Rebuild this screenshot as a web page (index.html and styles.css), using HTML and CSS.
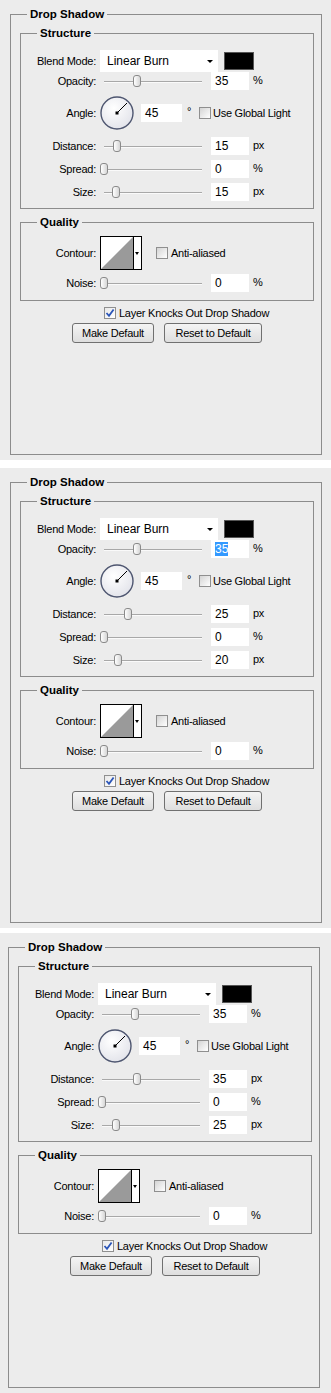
FILE: index.html
```html
<!DOCTYPE html>
<html lang="en">
<head>
  <meta charset="UTF-8">
  <title>Drop Shadow</title>
  <link rel="stylesheet" href="styles.css">
</head>
<body>

<!-- panel 1 -->
<div class="panel">
  <div class="outer">
    <div class="title">Drop Shadow</div>
    <div class="group">
      <div class="title">Structure</div>
      <div class="row row-blend">
        <span class="label">Blend Mode:</span>
        <div class="select">Linear Burn<span class="arrow"></span></div>
        <div class="swatch"></div>
      </div>
      <div class="row row-opacity">
        <span class="label">Opacity:</span>
        <div class="slider"><span class="thumb" style="left: 33px"></span></div>
        <div class="field">35</div>
        <span class="unit">%</span>
      </div>
      <div class="row row-angle">
        <span class="label">Angle:</span>
        <svg class="dial" width="34" height="34" viewBox="0 0 34 34">
          <defs>
            <radialGradient id="dialfill1" cx="40%" cy="35%" r="70%">
              <stop offset="0" stop-color="#ffffff"/>
              <stop offset="1" stop-color="#e2e3ea"/>
            </radialGradient>
          </defs>
          <circle cx="17" cy="17" r="16" fill="url(#dialfill1)" stroke="#4e5670" stroke-width="1.4"/>
          <line x1="17" y1="17" x2="27" y2="7" stroke="#000" stroke-width="1"/>
          <rect x="15.5" y="15.5" width="3" height="3" fill="#000"/>
        </svg>
        <div class="field field-angle">45</div>
        <span class="degree">&deg;</span>
        <span class="check"></span>
        <span class="check-text">Use Global Light</span>
      </div>
      <div class="row row-slider">
        <span class="label">Distance:</span>
        <div class="slider"><span class="thumb" style="left: 13px"></span></div>
        <div class="field">15</div>
        <span class="unit">px</span>
      </div>
      <div class="row row-slider">
        <span class="label">Spread:</span>
        <div class="slider"><span class="thumb" style="left: 0px"></span></div>
        <div class="field">0</div>
        <span class="unit">%</span>
      </div>
      <div class="row row-slider">
        <span class="label">Size:</span>
        <div class="slider"><span class="thumb" style="left: 12px"></span></div>
        <div class="field">15</div>
        <span class="unit">px</span>
      </div>
    </div>

    <div class="group group-quality">
      <div class="title">Quality</div>
      <div class="row row-contour">
        <span class="label">Contour:</span>
        <div class="contour">
          <svg width="34" height="34" viewBox="0 0 34 34">
            <rect x="0.5" y="0.5" width="33" height="33" fill="#fff" stroke="#000"/>
            <polygon points="1,33 33,1 33,33" fill="#9a9a9a"/>
          </svg>
          <span class="contour-arrow"></span>
        </div>
        <span class="check check-aa"></span>
        <span class="check-text">Anti-aliased</span>
      </div>
      <div class="row row-slider">
        <span class="label">Noise:</span>
        <div class="slider"><span class="thumb" style="left: 0px"></span></div>
        <div class="field">0</div>
        <span class="unit">%</span>
      </div>
    </div>

    <div class="knocks">
      <span class="check checked">
        <svg width="10" height="10" viewBox="0 0 10 10"><path d="M1.5 5 L4 7.8 L8.6 1.5" fill="none" stroke="#2b55b8" stroke-width="1.8"/></svg>
      </span>
      <span class="check-text">Layer Knocks Out Drop Shadow</span>
    </div>
    <div class="buttons">
      <button class="btn btn-make">Make Default</button>
      <button class="btn btn-reset">Reset to Default</button>
    </div>
  </div>
</div>

<!-- panel 2 -->
<div class="panel panel-second">
  <div class="outer">
    <div class="title">Drop Shadow</div>
    <div class="group">
      <div class="title">Structure</div>
      <div class="row row-blend">
        <span class="label">Blend Mode:</span>
        <div class="select">Linear Burn<span class="arrow"></span></div>
        <div class="swatch"></div>
      </div>
      <div class="row row-opacity">
        <span class="label">Opacity:</span>
        <div class="slider"><span class="thumb" style="left: 33px"></span></div>
        <div class="field"><span class="selected">35</span></div>
        <span class="unit">%</span>
      </div>
      <div class="row row-angle">
        <span class="label">Angle:</span>
        <svg class="dial" width="34" height="34" viewBox="0 0 34 34">
          <defs>
            <radialGradient id="dialfill2" cx="40%" cy="35%" r="70%">
              <stop offset="0" stop-color="#ffffff"/>
              <stop offset="1" stop-color="#e2e3ea"/>
            </radialGradient>
          </defs>
          <circle cx="17" cy="17" r="16" fill="url(#dialfill2)" stroke="#4e5670" stroke-width="1.4"/>
          <line x1="17" y1="17" x2="27" y2="7" stroke="#000" stroke-width="1"/>
          <rect x="15.5" y="15.5" width="3" height="3" fill="#000"/>
        </svg>
        <div class="field field-angle">45</div>
        <span class="degree">&deg;</span>
        <span class="check"></span>
        <span class="check-text">Use Global Light</span>
      </div>
      <div class="row row-slider">
        <span class="label">Distance:</span>
        <div class="slider"><span class="thumb" style="left: 24px"></span></div>
        <div class="field">25</div>
        <span class="unit">px</span>
      </div>
      <div class="row row-slider">
        <span class="label">Spread:</span>
        <div class="slider"><span class="thumb" style="left: 0px"></span></div>
        <div class="field">0</div>
        <span class="unit">%</span>
      </div>
      <div class="row row-slider">
        <span class="label">Size:</span>
        <div class="slider"><span class="thumb" style="left: 14px"></span></div>
        <div class="field">20</div>
        <span class="unit">px</span>
      </div>
    </div>

    <div class="group group-quality">
      <div class="title">Quality</div>
      <div class="row row-contour">
        <span class="label">Contour:</span>
        <div class="contour">
          <svg width="34" height="34" viewBox="0 0 34 34">
            <rect x="0.5" y="0.5" width="33" height="33" fill="#fff" stroke="#000"/>
            <polygon points="1,33 33,1 33,33" fill="#9a9a9a"/>
          </svg>
          <span class="contour-arrow"></span>
        </div>
        <span class="check check-aa"></span>
        <span class="check-text">Anti-aliased</span>
      </div>
      <div class="row row-slider">
        <span class="label">Noise:</span>
        <div class="slider"><span class="thumb" style="left: 0px"></span></div>
        <div class="field">0</div>
        <span class="unit">%</span>
      </div>
    </div>

    <div class="knocks">
      <span class="check checked">
        <svg width="10" height="10" viewBox="0 0 10 10"><path d="M1.5 5 L4 7.8 L8.6 1.5" fill="none" stroke="#2b55b8" stroke-width="1.8"/></svg>
      </span>
      <span class="check-text">Layer Knocks Out Drop Shadow</span>
    </div>
    <div class="buttons">
      <button class="btn btn-make">Make Default</button>
      <button class="btn btn-reset">Reset to Default</button>
    </div>
  </div>
</div>

<!-- panel 3 -->
<div class="panel panel-third">
  <div class="outer">
    <div class="title">Drop Shadow</div>
    <div class="group">
      <div class="title">Structure</div>
      <div class="row row-blend">
        <span class="label">Blend Mode:</span>
        <div class="select">Linear Burn<span class="arrow"></span></div>
        <div class="swatch"></div>
      </div>
      <div class="row row-opacity">
        <span class="label">Opacity:</span>
        <div class="slider"><span class="thumb" style="left: 33px"></span></div>
        <div class="field">35</div>
        <span class="unit">%</span>
      </div>
      <div class="row row-angle">
        <span class="label">Angle:</span>
        <svg class="dial" width="34" height="34" viewBox="0 0 34 34">
          <defs>
            <radialGradient id="dialfill3" cx="40%" cy="35%" r="70%">
              <stop offset="0" stop-color="#ffffff"/>
              <stop offset="1" stop-color="#e2e3ea"/>
            </radialGradient>
          </defs>
          <circle cx="17" cy="17" r="16" fill="url(#dialfill3)" stroke="#4e5670" stroke-width="1.4"/>
          <line x1="17" y1="17" x2="27" y2="7" stroke="#000" stroke-width="1"/>
          <rect x="15.5" y="15.5" width="3" height="3" fill="#000"/>
        </svg>
        <div class="field field-angle">45</div>
        <span class="degree">&deg;</span>
        <span class="check"></span>
        <span class="check-text">Use Global Light</span>
      </div>
      <div class="row row-slider">
        <span class="label">Distance:</span>
        <div class="slider"><span class="thumb" style="left: 35px"></span></div>
        <div class="field">35</div>
        <span class="unit">px</span>
      </div>
      <div class="row row-slider">
        <span class="label">Spread:</span>
        <div class="slider"><span class="thumb" style="left: 0px"></span></div>
        <div class="field">0</div>
        <span class="unit">%</span>
      </div>
      <div class="row row-slider">
        <span class="label">Size:</span>
        <div class="slider"><span class="thumb" style="left: 14px"></span></div>
        <div class="field">25</div>
        <span class="unit">px</span>
      </div>
    </div>

    <div class="group group-quality">
      <div class="title">Quality</div>
      <div class="row row-contour">
        <span class="label">Contour:</span>
        <div class="contour">
          <svg width="34" height="34" viewBox="0 0 34 34">
            <rect x="0.5" y="0.5" width="33" height="33" fill="#fff" stroke="#000"/>
            <polygon points="1,33 33,1 33,33" fill="#9a9a9a"/>
          </svg>
          <span class="contour-arrow"></span>
        </div>
        <span class="check check-aa"></span>
        <span class="check-text">Anti-aliased</span>
      </div>
      <div class="row row-slider">
        <span class="label">Noise:</span>
        <div class="slider"><span class="thumb" style="left: 0px"></span></div>
        <div class="field">0</div>
        <span class="unit">%</span>
      </div>
    </div>

    <div class="knocks">
      <span class="check checked">
        <svg width="10" height="10" viewBox="0 0 10 10"><path d="M1.5 5 L4 7.8 L8.6 1.5" fill="none" stroke="#2b55b8" stroke-width="1.8"/></svg>
      </span>
      <span class="check-text">Layer Knocks Out Drop Shadow</span>
    </div>
    <div class="buttons">
      <button class="btn btn-make">Make Default</button>
      <button class="btn btn-reset">Reset to Default</button>
    </div>
  </div>
</div>

</body>
</html>
```

FILE: styles.css
```css
body {
  margin: 0;
  background-color: #fff;
  font-family: 'Liberation Sans', Arial, sans-serif;
  font-size: 11px;
  letter-spacing: -0.25px;
  color: #000;
}
.panel {
  height: 460px;
  box-sizing: border-box;
  padding: 14px 9px 0 10px;
  background-color: #ececec;
}
.panel-second {
  margin-top: 8px;
}
.panel-third {
  margin-top: 5px;
  padding-left: 8px;
  padding-right: 11px;
}
.outer {
  height: 441px;
  box-sizing: border-box;
  border: 1px solid #8c8c8c;
}
.title {
  display: table;
  margin: -8px 0 0 16px;
  padding: 0 3px;
  line-height: 15px;
  font-weight: bold;
  font-size: 11.5px;
  letter-spacing: 0;
  background-color: #ececec;
}
.group {
  margin: 11px 7px 0 9px;
  padding-bottom: 6px;
  border: 1px solid #8c8c8c;
}
.group-quality {
  margin-top: 13px;
  padding-bottom: 7px;
}

/* rows */
.row {
  display: flex;
  align-items: center;
}
.label {
  width: 75px;
  margin-right: 4px;
  text-align: right;
}
.row-blend {
  height: 22px;
  margin-top: 9px;
}
.row-opacity {
  height: 18px;
}
.row-angle {
  height: 38px;
  margin-top: 4px;
}
.row-slider {
  height: 20px;
  margin-top: 3px;
}
.row-angle + .row-slider {
  margin-top: 4px;
}
.row-contour {
  height: 34px;
  margin-top: 6px;
}

/* controls */
.select {
  position: relative;
  width: 118px;
  height: 22px;
  box-sizing: border-box;
  padding-left: 7px;
  line-height: 22px;
  font-size: 12px;
  letter-spacing: 0;
  background-color: #fff;
}
.arrow {
  position: absolute;
  right: 5px;
  top: 10px;
  border-left: 3px solid transparent;
  border-right: 3px solid transparent;
  border-top: 3px solid #000;
}
.swatch {
  width: 30px;
  height: 18px;
  margin-left: 6px;
  box-sizing: border-box;
  background-color: #000;
  border: 1px solid #555;
}
.slider {
  position: relative;
  width: 107px;
  height: 20px;
}
.slider::before {
  content: '';
  position: absolute;
  left: 4px;
  right: 5px;
  top: 10px;
  height: 1px;
  background-color: #a8a8a8;
  box-shadow: 0 1px 0 #fafafa;
}
.thumb {
  position: absolute;
  top: 4px;
  width: 8px;
  height: 12px;
  box-sizing: border-box;
  border: 1px solid #8a8a8a;
  border-radius: 3px;
  background: linear-gradient(to right, #ffffff, #d6d6d6);
}
.field {
  width: 38px;
  height: 18px;
  margin-left: 4px;
  box-sizing: border-box;
  padding-left: 4px;
  line-height: 19px;
  font-size: 12px;
  letter-spacing: 0;
  background-color: #fff;
}
.field-angle {
  width: 41px;
  margin-left: 7px;
}
.selected {
  background-color: #3399ff;
  color: #fff;
}
.unit {
  margin-left: 4px;
  margin-top: -3px;
}
.degree {
  width: 12px;
  margin-left: 5px;
  margin-top: -5px;
}
.check {
  display: inline-flex;
  align-items: center;
  justify-content: center;
  width: 12px;
  height: 12px;
  box-sizing: border-box;
  border: 1px solid #8f8f8f;
  background: linear-gradient(135deg, #d4d4d4, #ffffff);
}
.check-text {
  margin-left: 2px;
}
.contour {
  display: flex;
  height: 34px;
}
.contour-arrow {
  position: relative;
  width: 8px;
  box-sizing: border-box;
  border: 1px solid #000;
  border-left: none;
  background-color: #fff;
}
.contour-arrow::after {
  content: '';
  position: absolute;
  left: 1px;
  top: 15px;
  border-left: 2px solid transparent;
  border-right: 2px solid transparent;
  border-top: 3px solid #000;
}
.check-aa {
  margin-left: 14px;
}
.check-aa + .check-text {
  margin-left: 3px;
}
.knocks {
  display: flex;
  align-items: center;
  height: 14px;
  margin-top: 5px;
  padding-left: 93px;
}
.knocks .check-text {
  margin-left: 3px;
}
.checked {
  background: linear-gradient(135deg, #e8e8e8, #ffffff);
}
.buttons {
  display: flex;
  gap: 10px;
  margin-top: 3px;
  padding-left: 61px;
}
.btn {
  height: 20px;
  padding: 0;
  font-family: 'Liberation Sans', Arial, sans-serif;
  font-size: 11px;
  letter-spacing: -0.25px;
  color: #000;
  border: 1px solid #707070;
  border-radius: 3px;
  background: linear-gradient(#f4f4f4, #dedede);
}
.btn-make {
  width: 82px;
}
.btn-reset {
  width: 98px;
}
```
